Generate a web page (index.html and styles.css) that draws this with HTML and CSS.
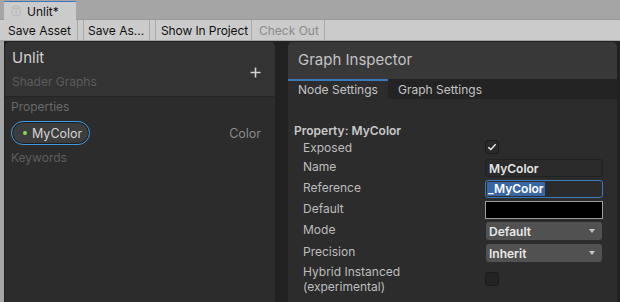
FILE: index.html
```html
<!DOCTYPE html>
<html>
<head>
<meta charset="utf-8">
<link rel="stylesheet" href="styles.css">
</head>
<body>
<div class="tabbar">
  <div class="tab">
    <svg class="tab-icon" width="10" height="12" viewBox="0 0 10 12"><path d="M1 2.5 L5 0.8 L9 2.5 L9 9.5 L5 11.2 L1 9.5 Z" fill="none" stroke="#b8b8b8" stroke-width="1"/><path d="M1 2.5 L5 4.2 L9 2.5 M5 4.2 L5 11.2" fill="none" stroke="#b8b8b8" stroke-width="1"/></svg>
    <span>Unlit*</span>
  </div>
</div>
<div class="toolbar">
  <div class="tbtn b1">Save Asset</div>
  <div class="tsep"></div>
  <div class="tbtn b2">Save As...</div>
  <div class="tsep"></div>
  <div class="tbtn b3">Show In Project</div>
  <div class="tbtn b4 disabled">Check Out</div>
</div>
<div class="main">
  <div class="blackboard">
    <div class="bb-header">
      <div class="bb-titles">
        <div class="bb-title">Unlit</div>
        <div class="bb-sub">Shader Graphs</div>
      </div>
      <svg class="plus" width="11" height="11" viewBox="0 0 11 11"><path d="M5.5 0.5 V10.5 M0.5 5.5 H10.5" stroke="#d4d4d4" stroke-width="1.6"/></svg>
    </div>
    <div class="bb-body">
      <div class="section">Properties</div>
      <div class="prop-row">
        <div class="pill"><span class="dot"></span>MyColor</div>
        <span class="ptype">Color</span>
      </div>
      <div class="section kw">Keywords</div>
    </div>
  </div>
  <div class="inspector">
    <div class="insp-header">Graph Inspector</div>
    <div class="insp-tabs">
      <div class="itab active">Node Settings</div>
      <div class="itab">Graph Settings</div>
    </div>
    <div class="insp-body">
      <div class="prop-title">Property: MyColor</div>
      <div class="row r-exposed">
        <div class="label">Exposed</div>
        <div class="ctrl"><div class="check"><svg width="12" height="12" viewBox="0 0 12 12"><path d="M2.3 6.2 L4.8 8.6 L9.6 3.2" fill="none" stroke="#f0f0f0" stroke-width="1.4"/></svg></div></div>
      </div>
      <div class="row">
        <div class="label">Name</div>
        <div class="ctrl"><div class="field">MyColor</div></div>
      </div>
      <div class="row">
        <div class="label">Reference</div>
        <div class="ctrl"><div class="field focus"><span class="sel">_MyColor</span></div></div>
      </div>
      <div class="row">
        <div class="label">Default</div>
        <div class="ctrl"><div class="colorfield"></div></div>
      </div>
      <div class="row r-mode">
        <div class="label">Mode</div>
        <div class="ctrl"><div class="dropdown"><span>Default</span><span class="arrow"></span></div></div>
      </div>
      <div class="row r-prec">
        <div class="label">Precision</div>
        <div class="ctrl"><div class="dropdown"><span>Inherit</span><span class="arrow"></span></div></div>
      </div>
      <div class="row hybrid">
        <div class="label">Hybrid Instanced<br>(experimental)</div>
        <div class="ctrl"><div class="check off"></div></div>
      </div>
    </div>
  </div>
</div>
</body>
</html>
```
FILE: styles.css
```css
* { box-sizing: border-box; }
html, body {
  margin: 0;
  padding: 0;
  width: 620px;
  height: 302px;
  overflow: hidden;
  background: #212121;
  font-family: "Inter", "Noto Sans", "DejaVu Sans", sans-serif;
  font-size: 12px;
}
.tabbar {
  height: 20px;
  background: #a5a5a5;
  border-bottom: 1px solid #999999;
  display: flex;
  align-items: flex-end;
}
.tab {
  margin-left: 4px;
  width: 72px;
  height: 19px;
  margin-bottom: -1px;
  background: #cbcbcb;
  border-top: 1px solid #3a79bb;
  display: flex;
  align-items: center;
  padding-left: 7px;
  color: #111;
}
.tab-icon { margin-right: 6px; }
.toolbar {
  height: 21px;
  background: #cbcbcb;
  border-bottom: 1px solid #a3a3a3;
  display: flex;
  align-items: stretch;
  color: #111;
}
.tbtn {
  display: flex;
  align-items: center;
  border-right: 1px solid #a8a8a8;
  white-space: nowrap;
}
.b1 { width: 78px; padding-left: 8px; }
.b2 { width: 66px; padding-left: 4px; }
.b3 { width: 96px; padding-left: 5px; letter-spacing: -0.1px; }
.b4 { width: 73px; padding-left: 7px; }
.tsep { width: 6px; border-right: 1px solid #a8a8a8; }
.disabled { color: #8a8a8a; }

.main {
  height: 261px;
  display: flex;
  border-left: 4px solid #a5a5a5;
  padding: 1px 3px 0 1px;
  background: #212121;
}
.blackboard {
  width: 270px;
  background: #2c2c2c;
  border-radius: 5px 5px 0 0;
  overflow: hidden;
}
.bb-header {
  height: 55px;
  background: #333333;
  border-bottom: 1px solid #242424;
  display: flex;
  justify-content: space-between;
  padding: 7px 14px 0 7px;
}
.bb-title {
  font-size: 15px;
  line-height: 18px;
  color: #d2d2d2;
}
.bb-sub {
  margin-top: 7px;
  line-height: 15px;
  color: #5c5c5c;
}
.plus { margin-top: 18px; }
.bb-body { padding: 2px 14px 0 6px; }
.section {
  line-height: 15px;
  color: #6a6a6a;
}
.prop-row {
  margin-top: 7px;
  display: flex;
  justify-content: space-between;
  align-items: center;
}
.pill {
  height: 24px;
  width: 79px;
  border-radius: 12px;
  border: 1px solid #3d9be6;
  box-shadow: inset 0 0 0 1px #1e1e1e;
  background: #3d3d3d;
  display: flex;
  align-items: center;
  padding-left: 11px;
  color: #d4d4d4;
  font-size: 12.5px;
}
.dot {
  width: 4px;
  height: 4px;
  border-radius: 50%;
  background: #86de4c;
  margin-right: 5px;
}
.ptype { color: #8a8a8a; font-size: 12.5px; }
.kw { margin-top: 5px; color: #5e5e5e; }

.inspector {
  margin-left: 13px;
  flex: 1;
  background: #2c2c2c;
  border-radius: 5px 5px 0 0;
  overflow: hidden;
}
.insp-header {
  height: 37px;
  background: #383838;
  padding: 9px 0 0 10px;
  font-size: 15px;
  line-height: 18px;
  color: #c4c4c4;
}
.insp-tabs {
  height: 20px;
  background: #232323;
  display: flex;
}
.itab {
  padding: 0 10px;
  display: flex;
  align-items: center;
  color: #c4c4c4;
}
.itab.active {
  width: 100px;
  background: #2c2c2c;
  border-top: 2px solid #3a79bb;
  padding-bottom: 1px;
}
.insp-body { padding: 24px 14px 0 6px; }
.prop-title {
  line-height: 15px;
  font-weight: 600;
  color: #c8c8c8;
  margin-bottom: 2px;
}
.row {
  height: 21px;
  display: flex;
  align-items: flex-start;
  padding-left: 9px;
}
.row.r-exposed { height: 19px; }
.row.r-mode { height: 22px; }
.row.r-prec { height: 20px; }
.row.hybrid { height: 30px; align-items: center; }
.label {
  width: 182px;
  color: #bdbdbd;
  line-height: 15px;
}
.ctrl { flex: 1; display: flex; }
.check {
  width: 14px;
  height: 14px;
  border-radius: 3px;
  background: #2a2a2a;
  border: 1px solid #1b1b1b;
  display: flex;
  align-items: center;
  justify-content: center;
}
.check.off { background: #232323; }
.field {
  width: 118px;
  height: 18px;
  border-radius: 3px;
  background: #2a2a2a;
  border: 1px solid #202020;
  padding-left: 3px;
  display: flex;
  align-items: center;
  font-weight: 600;
  color: #e4e4e4;
}
.field.focus {
  border-color: #3a79bb;
  padding-left: 1px;
}
.sel {
  background: #3a67a3;
  color: #ffffff;
  line-height: 14px;
  padding: 0 1px;
}
.colorfield {
  width: 118px;
  height: 18px;
  background: #000;
  border: 1px solid #9c9c9c;
}
.dropdown {
  margin-left: 1px;
  width: 116px;
  height: 18px;
  border-radius: 3px;
  background: #515151;
  display: flex;
  align-items: center;
  justify-content: space-between;
  padding: 0 7px 0 3px;
  font-weight: 600;
  color: #e8e8e8;
}
.arrow {
  width: 0;
  height: 0;
  border-left: 3px solid transparent;
  border-right: 3px solid transparent;
  border-top: 4px solid #c8c8c8;
}
```
